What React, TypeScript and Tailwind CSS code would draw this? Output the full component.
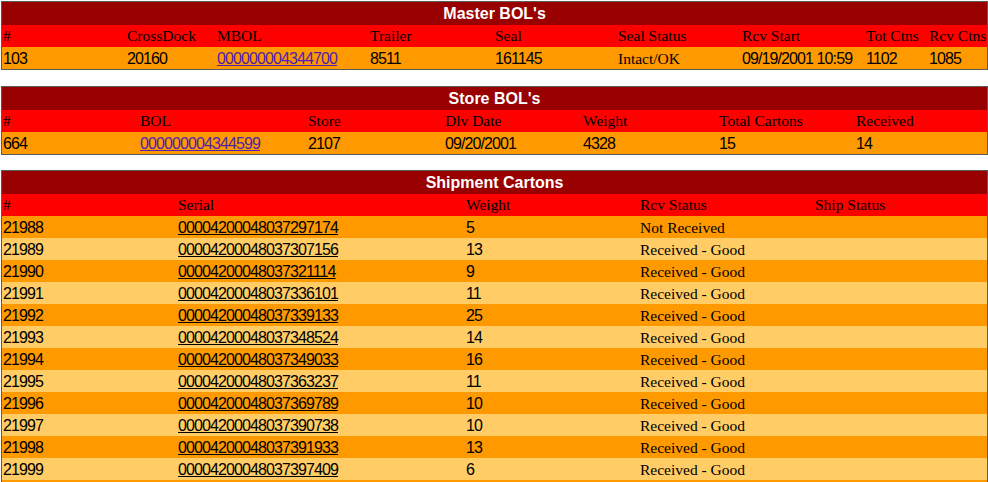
import React from 'react'

type Cell = { v: string; num?: boolean; link?: 'visited' | 'plain' }

const serif = "font-['Liberation_Serif','Times_New_Roman',serif] text-[15.5px]"
const sans = "font-['Liberation_Sans',Arial,sans-serif] text-[16px] tracking-[-0.9px]"

const Value = ({ c }: { c: Cell }) => {
  const font = c.num ? sans : serif
  if (c.link === 'visited') {
    return <a href="#" className={`${font} text-[#4f1fb0] underline`}>{c.v}</a>
  }
  if (c.link === 'plain') {
    return <a href="#" className={`${font} text-black underline`}>{c.v}</a>
  }
  return <span className={font}>{c.v}</span>
}

const Section = ({
  title,
  cols,
  heads,
  rows,
  className = '',
}: {
  title: string
  cols: number[]
  heads: string[]
  rows: Cell[][]
  className?: string
}) => {
  return (
    <div className={`ml-[1px] w-[987px] border border-[#5a5a5a] ${className}`}>
      <table className="w-full table-fixed border-collapse">
        <colgroup>
          {cols.map((w, i) => (
            <col key={i} style={{ width: w }} />
          ))}
        </colgroup>
        <tbody>
          <tr className="bg-[#990000]">
            <td colSpan={cols.length} className="p-0">
              <div className="h-[23px] overflow-hidden text-center font-['Liberation_Sans',Arial,sans-serif] text-[16px] font-bold text-white leading-[23px]">
                {title}
              </div>
            </td>
          </tr>
          <tr className="bg-[#ff0000]">
            {heads.map((h, i) => (
              <td key={i} className="p-0">
                <div className={`h-[22px] overflow-hidden whitespace-nowrap pl-[1px] text-black leading-[22px] ${serif}`}>
                  {h}
                </div>
              </td>
            ))}
          </tr>
          {rows.map((r, ri) => (
            <tr key={ri} className={ri % 2 === 0 ? 'bg-[#ff9900]' : 'bg-[#ffcc66]'}>
              {r.map((c, ci) => (
                <td key={ci} className="p-0">
                  <div className="h-[22px] overflow-hidden whitespace-nowrap pl-[1px] text-black leading-[22px]">
                    <Value c={c} />
                  </div>
                </td>
              ))}
            </tr>
          ))}
        </tbody>
      </table>
    </div>
  )
}

const cartons: [string, string, string, string][] = [
  ['21988', '00004200048037297174', '5', 'Not Received'],
  ['21989', '00004200048037307156', '13', 'Received - Good'],
  ['21990', '00004200048037321114', '9', 'Received - Good'],
  ['21991', '00004200048037336101', '11', 'Received - Good'],
  ['21992', '00004200048037339133', '25', 'Received - Good'],
  ['21993', '00004200048037348524', '14', 'Received - Good'],
  ['21994', '00004200048037349033', '16', 'Received - Good'],
  ['21995', '00004200048037363237', '11', 'Received - Good'],
  ['21996', '00004200048037369789', '10', 'Received - Good'],
  ['21997', '00004200048037390738', '10', 'Received - Good'],
  ['21998', '00004200048037391933', '13', 'Received - Good'],
  ['21999', '00004200048037397409', '6', 'Received - Good'],
  ['22000', '00004200048037401126', '12', 'Received - Good'],
]

const App = () => {
  return (
    <div className="min-h-screen bg-white pt-[1px]">
      <Section
        title="Master BOL's"
        cols={[124, 90, 153, 125, 123, 124, 124, 63, 59]}
        heads={['#', 'CrossDock', 'MBOL', 'Trailer', 'Seal', 'Seal Status', 'Rcv Start', 'Tot Ctns', 'Rcv Ctns']}
        rows={[
          [
            { v: '103', num: true },
            { v: '20160', num: true },
            { v: '000000004344700', num: true, link: 'visited' },
            { v: '8511', num: true },
            { v: '161145', num: true },
            { v: 'Intact/OK' },
            { v: '09/19/2001 10:59', num: true },
            { v: '1102', num: true },
            { v: '1085', num: true },
          ],
        ]}
      />
      <Section
        className="mt-[16px]"
        title="Store BOL's"
        cols={[137, 168, 137, 138, 136, 137, 132]}
        heads={['#', 'BOL', 'Store', 'Dlv Date', 'Weight', 'Total Cartons', 'Received']}
        rows={[
          [
            { v: '664', num: true },
            { v: '000000004344599', num: true, link: 'visited' },
            { v: '2107', num: true },
            { v: '09/20/2001', num: true },
            { v: '4328', num: true },
            { v: '15', num: true },
            { v: '14', num: true },
          ],
        ]}
      />
      <Section
        className="mt-[15px]"
        title="Shipment Cartons"
        cols={[175, 288, 174, 175, 173]}
        heads={['#', 'Serial', 'Weight', 'Rcv Status', 'Ship Status']}
        rows={cartons.map(([id, serial, w, st]) => [
          { v: id, num: true },
          { v: serial, num: true, link: 'plain' },
          { v: w, num: true },
          { v: st },
          { v: '' },
        ])}
      />
    </div>
  )
}

export default App
